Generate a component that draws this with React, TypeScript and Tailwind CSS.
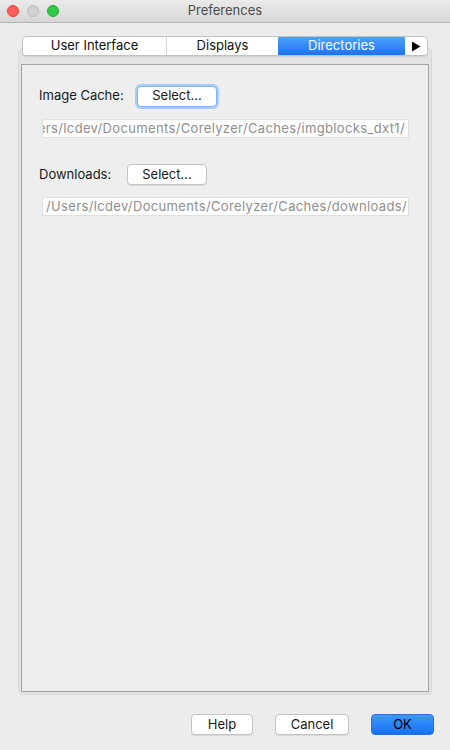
const font = { fontFamily: '"Inter", "Liberation Sans", sans-serif' };

function MacButton({ label, primary, focused, className }: { label: string; primary?: boolean; focused?: boolean; className: string }) {
  if (primary) {
    return (
      <div className={`h-[21px] flex items-center justify-center rounded-[4px] bg-gradient-to-b from-[#3f98fb] to-[#1570f5] border border-[#2a6fd9] text-[13px] text-black ${className}`}>
        {label}
      </div>
    );
  }
  return (
    <div
      className={`h-[21px] flex items-center justify-center rounded-[4px] bg-white border text-[13px] text-[#1a1a1a] ${
        focused ? 'border-[#7eb3f3] ring-[2px] ring-[#a9cdf8]' : 'border-[#c4c4c4] shadow-[0_1px_0_rgba(0,0,0,0.08)]'
      } ${className}`}
    >
      {label}
    </div>
  );
}

function PathField({ path, alignEnd }: { path: string; alignEnd?: boolean }) {
  return (
    <div
      className={`ml-[20px] w-[367px] h-[19px] bg-white border border-[#e0e0e0] flex items-center overflow-hidden whitespace-nowrap text-[13px] text-[#8e8e8e] px-[3px] ${
        alignEnd ? 'justify-end' : 'justify-start'
      }`}
    >
      <span className="shrink-0 tracking-[0.35px]">{path}</span>
    </div>
  );
}

export default function App() {
  const tabs = [
    { name: 'User Interface', w: 'w-[143px]' },
    { name: 'Displays', w: 'w-[112px]' },
    { name: 'Directories', w: 'w-[127px]', active: true },
  ];

  return (
    <div style={font} className="w-[450px] h-[750px] bg-[#ececec] flex flex-col overflow-hidden">
      {/* title bar */}
      <div className="h-[23px] shrink-0 bg-gradient-to-b from-[#ebebeb] to-[#d6d6d6] border-b border-[#b4b4b4] flex items-center px-[7px] relative">
        <div className="flex gap-[8px]">
          <span className="w-[12px] h-[12px] rounded-full bg-[#fc5f57] border border-[#e0443e]" />
          <span className="w-[12px] h-[12px] rounded-full bg-[#d0d0d0] border border-[#bdbdbd]" />
          <span className="w-[12px] h-[12px] rounded-full bg-[#33c748] border border-[#27aa35]" />
        </div>
        <div className="flex-1 text-center text-[13px] text-[#4d4d4d] pr-[52px]">Preferences</div>
      </div>

      <div className="flex-1 flex flex-col px-[18px] pt-[13px]">
        {/* tabs */}
        <div className="relative z-10 mx-[4px] h-[20px] flex bg-white border border-[#c2c2c2] rounded-[4px] overflow-hidden shadow-[0_1px_1px_rgba(0,0,0,0.08)]">
          {tabs.map((t, i) => (
            <div
              key={t.name}
              className={`${t.w} flex items-center justify-center text-[13px] ${
                t.active
                  ? 'bg-gradient-to-b from-[#4fa1fb] to-[#1a72f6] text-white'
                  : `text-[#111] ${i > 0 ? 'border-l border-[#d4d4d4]' : ''}`
              }`}
            >
              {t.name}
            </div>
          ))}
          <div className="flex-1 flex items-center justify-center">
            <svg width="10" height="11" viewBox="0 0 10 11">
              <path d="M1 0.5 L9.5 5.5 L1 10.5 Z" fill="#000" />
            </svg>
          </div>
        </div>

        {/* tab pane */}
        <div className="mt-[-8px] h-[647px] bg-[#e3e3e3] border border-[#d8d8d8] rounded-[4px] px-[2px] pt-[15px] pb-[2px] flex">
          <div className="flex-1 bg-[#eeeeee] border border-[#a3a3a3] flex flex-col">
            <div className="flex items-center mt-[21px] h-[20px]">
              <span className="ml-[17px] w-[98px] text-[13px] text-[#1a1a1a]">Image Cache:</span>
              <MacButton label="Select..." focused className="w-[80px]" />
            </div>
            <div className="mt-[13px]">
              <PathField path="/Users/lcdev/Documents/Corelyzer/Caches/imgblocks_dxt1/" alignEnd />
            </div>

            <div className="flex items-center mt-[26px] h-[21px]">
              <span className="ml-[17px] w-[88px] text-[13px] text-[#1a1a1a]">Downloads:</span>
              <MacButton label="Select..." className="w-[80px]" />
            </div>
            <div className="mt-[12px]">
              <PathField path="/Users/lcdev/Documents/Corelyzer/Caches/downloads/" />
            </div>
          </div>
        </div>

        {/* buttons */}
        <div className="mt-[19px] flex justify-end gap-[22px] pr-[-2px] mr-[-2px]">
          <MacButton label="Help" className="w-[62px]" />
          <MacButton label="Cancel" className="w-[74px]" />
          <MacButton label="OK" primary className="w-[63px]" />
        </div>
      </div>
    </div>
  );
}
